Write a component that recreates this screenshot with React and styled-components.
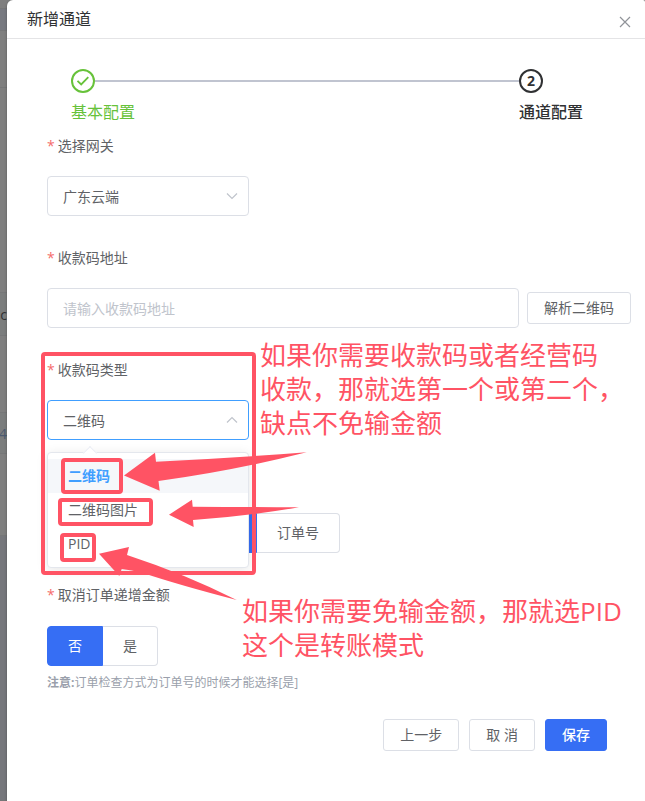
import React, { useState } from 'react';
import styled, { createGlobalStyle } from 'styled-components';

const GlobalStyle = createGlobalStyle`
  * {
    box-sizing: border-box;
  }

  body {
    margin: 0;
    background: #7e7f7f;
    font-family: "Open Sans", "Noto Sans CJK SC", sans-serif;
    font-size: 14px;
    color: #606266;
  }

  button, input, select {
    font: inherit;
    color: inherit;
  }
`;

const PageWrapper = styled.div`
  display: grid;
  grid-template-columns: 7px 1fr;
  min-height: 100vh;
`;

const Backdrop = styled.div`
  display: flex;
  flex-direction: column;
  overflow: hidden;
  box-shadow: inset -3px 0 3px rgba(0, 0, 0, 0.12);
`;

const Band = styled.div`
  flex: ${props => (props.$fill ? '1 0 auto' : '0 0 auto')};
  height: ${props => props.$height}px;
  background: ${props => props.$color || '#7f7f7f'};
  border-bottom: 1px solid #767778;
  display: flex;
  align-items: center;
  justify-content: flex-end;
  overflow: hidden;
  white-space: nowrap;
  color: ${props => props.$ink || '#303133'};
`;

const Dialog = styled.div`
  position: relative;
  background: #fff;
  border-radius: 6px 2px 0 0;
  box-shadow: 0 1px 3px rgba(0, 0, 0, 0.3);
`;

const Header = styled.header`
  display: flex;
  align-items: center;
  justify-content: space-between;
  height: 39px;
  padding: 0 12px 0 20px;
  border-bottom: 1px solid #e4e4e6;
`;

const Title = styled.h1`
  margin: 0;
  font-size: 16px;
  line-height: 24px;
  font-weight: 400;
  color: #303133;
`;

const CloseButton = styled.button`
  display: flex;
  margin: 5px 0 0;
  padding: 0;
  border: none;
  background: none;
  color: #909399;
  cursor: pointer;
`;

const Body = styled.form`
  padding: 30px 14px 0 40px;
`;

const Steps = styled.ol`
  display: flex;
  list-style: none;
  margin: 0 0 2px;
  padding: 0 48px 0 24px;
`;

const Step = styled.li`
  flex: ${props => (props.$last ? '0 0 auto' : '1')};
  color: ${props => (props.$done ? '#67c23a' : '#303133')};
  font-weight: ${props => (props.$done ? 400 : 700)};
`;

const StepHead = styled.div`
  display: flex;
  align-items: center;
`;

const StepCircle = styled.span`
  display: flex;
  align-items: center;
  justify-content: center;
  width: 24px;
  height: 24px;
  border: 2px solid currentColor;
  border-radius: 50%;
  line-height: 20px;
`;

const StepLine = styled.span`
  flex: 1;
  height: 2px;
  background: #c0c4d0;
`;

const StepTitle = styled.div`
  margin-top: 7px;
  font-size: 16px;
  line-height: 24px;
  font-weight: ${props => (props.$done ? 400 : 500)};
`;

const Field = styled.div`
  margin-bottom: 22px;
`;

const Label = styled.label`
  display: block;
  height: 40px;
  margin-bottom: 10px;
  line-height: 40px;

  &::before {
    content: '*';
    margin-right: 3px;
    color: #f56c6c;
  }
`;

const SelectBox = styled.div`
  position: relative;
  width: 202px;
`;

const Select = styled.select`
  display: block;
  width: 100%;
  height: 40px;
  padding: 0 30px 0 15px;
  appearance: none;
  border: 1px solid ${props => (props.$open ? '#409eff' : '#dcdfe6')};
  border-radius: 4px;
  background: #fff;
  outline: none;
`;

const SelectArrow = styled.svg`
  position: absolute;
  top: 16px;
  right: 11px;
  pointer-events: none;
`;

const Menu = styled.ul`
  position: absolute;
  z-index: 1;
  top: 52px;
  left: 0;
  width: 100%;
  margin: 0;
  padding: 6px 0;
  list-style: none;
  background: #fff;
  border: 1px solid #e4e7ed;
  border-radius: 4px;
  box-shadow: 0 2px 12px rgba(0, 0, 0, 0.1);

  &::before {
    content: '';
    position: absolute;
    top: -5px;
    left: 37px;
    width: 9px;
    height: 9px;
    background: #fff;
    border: solid #ebeef5;
    border-width: 1px 0 0 1px;
    transform: rotate(45deg);
  }
`;

const Option = styled.li`
  position: relative;
  height: 34px;
  padding: 0 20px;
  line-height: 34px;
  cursor: pointer;
  background: ${props => (props.$active ? '#f5f7fa' : '#fff')};
  color: ${props => (props.$active ? '#409eff' : '#606266')};
  font-weight: ${props => (props.$active ? 700 : 400)};
`;

const InputRow = styled.div`
  display: flex;
  align-items: center;
  gap: 8px;
`;

const TextInput = styled.input`
  flex: 1;
  min-width: 0;
  height: 40px;
  padding: 0 15px;
  border: 1px solid #dcdfe6;
  border-radius: 4px;
  outline: none;

  &::placeholder {
    color: #c0c4cc;
    opacity: 1;
  }
`;

const Button = styled.button`
  height: 32px;
  padding: 0 16px;
  line-height: 30px;
  white-space: nowrap;
  border: 1px solid ${props => (props.$primary ? '#366ef4' : '#dcdfe6')};
  border-radius: 3px;
  background: ${props => (props.$primary ? '#366ef4' : '#fff')};
  color: ${props => (props.$primary ? '#fff' : '#606266')};
  font-weight: ${props => (props.$primary ? 500 : 400)};
  cursor: pointer;
`;

const RadioGroup = styled.div`
  display: flex;
  margin-top: 11px;
`;

const LabelSpace = styled.div`
  height: 40px;
`;

const RadioInput = styled.input`
  appearance: none;
  position: absolute;
  margin: 0;
`;

const RadioButton = styled.label`
  width: ${props => (props.$wide ? '210px' : 'auto')};
  height: 40px;
  padding: 0 20px;
  line-height: 38px;
  border: 1px solid #dcdfe6;
  border-left-width: 0;
  cursor: pointer;

  &:first-child {
    border-left-width: 1px;
    border-radius: 4px 0 0 4px;
  }

  &:last-child {
    border-radius: 0 4px 4px 0;
  }

  &:has(input:checked) {
    background: #366ef4;
    border-color: #366ef4;
    color: #fff;
  }
`;

const Hint = styled.p`
  margin: 8px 0 0;
  font-size: 12px;
  line-height: 18px;
  color: #9a9fab;
`;

const Footer = styled.footer`
  display: flex;
  justify-content: flex-end;
  gap: 10px;
  padding: 5px 24px 50px 0;
`;

const Marks = styled.svg`
  position: absolute;
  z-index: 2;
  top: 0;
  left: 0;
  overflow: visible;
  pointer-events: none;
`;

const Remark = styled.p`
  position: absolute;
  z-index: 2;
  top: ${props => props.$top}px;
  left: ${props => props.$left}px;
  margin: 0;
  font-size: 26px;
  line-height: 34px;
  white-space: nowrap;
  color: #ff5364;
  pointer-events: none;
`;

const codeTypes = ['二维码', '二维码图片', 'PID'];

const Chevron = ({ up }) => (
  <SelectArrow width="12" height="8" viewBox="0 0 12 8" fill="none" stroke="#c0c4cc" strokeWidth="1.2">
    <path d={up ? 'M1 6.5 6 1.5l5 5' : 'M1 1.5l5 5 5-5'} />
  </SelectArrow>
);

const Radio = ({ name, text, hiddenText, wide, defaultChecked }) => (
  <RadioButton $wide={wide}>
    <RadioInput type="radio" name={name} aria-label={hiddenText} defaultChecked={defaultChecked} />
    {text}
  </RadioButton>
);

const Annotations = () => (
  <>
    <Marks width="1" height="1" aria-hidden="true">
      <g fill="none" stroke="#ff5364" strokeWidth="4">
        <rect x="36" y="354" width="211" height="219" rx="2" />
        <rect x="56" y="460" width="58" height="32" rx="2" />
        <rect x="53" y="500" width="91" height="24" rx="2" />
        <rect x="55" y="535" width="32" height="25" rx="2" />
      </g>
      <g fill="#ff5364">
        <path d="M117 475.5 148 452.7 149 461.7 Q225 458 299.7 452.3 Q225 471 151.5 481 L152.7 490.7Z" />
        <path d="M162 514.7 185 499.7 185.7 506.7 Q240 507 292 507.3 Q240 516 186 520 L186.7 527Z" />
        <path d="M92 553.7 122 547 120 555 Q178 574 229.7 600 Q172 585 136 573 Q124 570 114.7 569 L112.3 576Z" />
      </g>
    </Marks>
    <Remark $top={338} $left={253}>
      如果你需要收款码或者经营码
      <br />
      收款，那就选第一个或第二个，
      <br />
      缺点不免输金额
    </Remark>
    <Remark $top={594} $left={235}>
      如果你需要免输金额，那就选PID
      <br />
      这个是转账模式
    </Remark>
  </>
);

const ChannelForm = () => {
  const [codeType, setCodeType] = useState('二维码');

  return (
    <Body onSubmit={e => e.preventDefault()}>
      <Steps>
        <Step $done>
          <StepHead>
            <StepCircle>
              <svg width="14" height="12" viewBox="0 0 14 12" fill="none" stroke="currentColor" strokeWidth="1.8">
                <path d="M1.5 5.8 5.2 9.5 12.3 2.2" />
              </svg>
            </StepCircle>
            <StepLine />
          </StepHead>
          <StepTitle $done>基本配置</StepTitle>
        </Step>
        <Step $last>
          <StepHead>
            <StepCircle>2</StepCircle>
          </StepHead>
          <StepTitle>通道配置</StepTitle>
        </Step>
      </Steps>
      <Field>
        <Label htmlFor="gateway">选择网关</Label>
        <SelectBox>
          <Select id="gateway">
            <option>广东云端</option>
          </Select>
          <Chevron />
        </SelectBox>
      </Field>
      <Field>
        <Label htmlFor="address">收款码地址</Label>
        <InputRow>
          <TextInput id="address" type="text" placeholder="请输入收款码地址" />
          <Button type="button">解析二维码</Button>
        </InputRow>
      </Field>
      <Field>
        <Label htmlFor="codeType">收款码类型</Label>
        <SelectBox>
          <Select id="codeType" $open value={codeType} onChange={e => setCodeType(e.target.value)}>
            {codeTypes.map(type => <option key={type}>{type}</option>)}
          </Select>
          <Chevron up />
          <Menu role="listbox" aria-label="收款码类型">
            {codeTypes.map(type => (
              <Option
                key={type}
                role="option"
                aria-selected={type === codeType}
                $active={type === codeType}
                onClick={() => setCodeType(type)}
              >
                {type}
              </Option>
            ))}
          </Menu>
        </SelectBox>
      </Field>
      <Field>
        <LabelSpace />
        <RadioGroup role="radiogroup" aria-label="订单检查方式">
          <Radio name="check" hiddenText="金额" wide defaultChecked />
          <Radio name="check" text="订单号" />
        </RadioGroup>
      </Field>
      <Field>
        <Label as="div" id="increase">取消订单递增金额</Label>
        <RadioGroup role="radiogroup" aria-labelledby="increase">
          <Radio name="increase" text="否" defaultChecked />
          <Radio name="increase" text="是" />
        </RadioGroup>
        <Hint><b>注意:</b>订单检查方式为订单号的时候才能选择[是]</Hint>
      </Field>
      <Footer>
        <Button type="button">上一步</Button>
        <Button type="button">取 消</Button>
        <Button type="submit" $primary>保存</Button>
      </Footer>
    </Body>
  );
};

const App = () => (
  <>
    <GlobalStyle />
    <PageWrapper>
      <Backdrop aria-hidden="true">
        <Band $height={9} />
        <Band $height={22} $color="#777980" />
        <Band $height={57} />
        <Band $height={205} />
        <Band $height={43} $color="#7b7d7d">.c</Band>
        <Band $height={77} />
        <Band $height={41} $color="#7b7d7d" $ink="#4c5a70">4</Band>
        <Band $height={82} />
        <Band $height={260} $color="#76777c" $fill />
      </Backdrop>
      <Dialog role="dialog" aria-labelledby="dialogTitle">
        <Header>
          <Title id="dialogTitle">新增通道</Title>
          <CloseButton type="button" aria-label="关闭">
            <svg width="16" height="16" viewBox="0 0 16 16" fill="none" stroke="currentColor" strokeWidth="1.2">
              <path d="M3 3l10 10M13 3 3 13" />
            </svg>
          </CloseButton>
        </Header>
        <ChannelForm />
        <Annotations />
      </Dialog>
    </PageWrapper>
  </>
);

export default App;
